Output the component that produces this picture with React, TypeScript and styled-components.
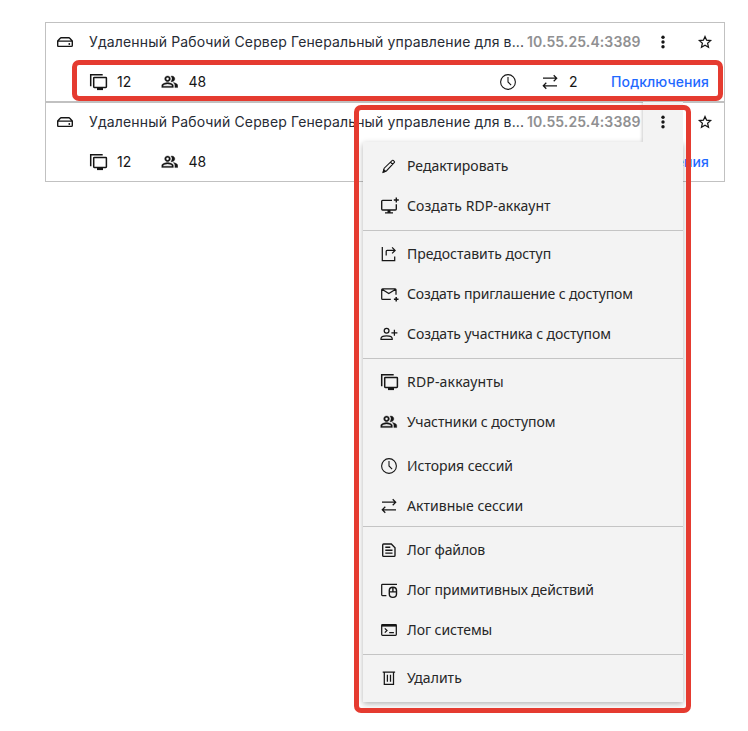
import React from 'react';
import styled, { createGlobalStyle } from 'styled-components';
import { MdOutlinePeopleAlt } from 'react-icons/md';

const GlobalStyle = createGlobalStyle`
  *, *::before, *::after { box-sizing: border-box; }
  body { margin: 0; background: #fff; }
`;

const Page = styled.main`
  position: relative;
  width: 748px;
  height: 731px;
  padding: 22px 23px 0 45px;
  overflow: hidden;
  font-family: Inter, 'Liberation Sans', sans-serif;
  color: #161616;
`;

const Card = styled.section`
  position: relative;
  height: 80px;
  box-shadow: inset 0 0 0 1px #c1c1c1;
`;

const TitleRow = styled.header`
  display: flex;
  align-items: center;
  height: 40px;
  padding-left: 10px;
`;

const StatsRow = styled.div`
  display: flex;
  align-items: center;
  height: 40px;
  padding: 0 16px 0 43px;
`;

const Title = styled.span`
  flex: none;
  width: 438px;
  margin-left: 14px;
  font-size: 14px;
  line-height: 20px;
  letter-spacing: 0.14px;
  white-space: nowrap;
  color: #272b35;
`;

const Address = styled.span`
  flex: none;
  width: 116px;
  font-size: 14px;
  font-weight: 600;
  line-height: 20px;
  letter-spacing: 0.1px;
  white-space: nowrap;
  color: #909092;
`;

const IconButton = styled.button<{ $open?: boolean }>`
  position: relative;
  z-index: ${(p) => (p.$open ? 3 : 0)};
  display: flex;
  flex: none;
  align-items: center;
  justify-content: center;
  width: 40px;
  height: 40px;
  padding: 0;
  border: 0;
  color: inherit;
  background: ${(p) => (p.$open ? '#f3f3f3' : 'transparent')};
  box-shadow: ${(p) => (p.$open ? '-1px 0 3px rgba(0, 0, 0, 0.2)' : 'none')};
  clip-path: ${(p) => (p.$open ? 'inset(0 0 0 -6px)' : 'none')};

  & + & { margin-left: 2px; }
`;

const Stat = styled.span<{ $width: number }>`
  display: flex;
  flex: none;
  align-items: center;
  gap: 9px;
  width: ${(p) => p.$width}px;
  font-size: 14px;
  line-height: 20px;
`;

const Spacer = styled.span`
  flex: 1;
`;

const ConnectionsLink = styled.a`
  font-size: 14px;
  font-weight: 500;
  line-height: 20px;
  letter-spacing: 0.08px;
  color: #1f69ff;
`;

const Menu = styled.nav`
  position: absolute;
  z-index: 2;
  top: 40px;
  left: 318px;
  width: 320px;
  font-family: 'Noto Sans', sans-serif;
  background: #f3f3f3;
  box-shadow: 0 2px 6px rgba(0, 0, 0, 0.3);
`;

const MenuGroup = styled.div<{ $flush: boolean }>`
  padding: 4px 0 ${(p) => (p.$flush ? 0 : 4)}px;

  & + & {
    padding-top: 3px;
    border-top: 1px solid #c4c4c4;
  }
`;

const MenuSubgroup = styled.div`
  & + & { margin-top: 4px; }
`;

const MenuItem = styled.div`
  display: flex;
  align-items: center;
  gap: 8px;
  height: 40px;
  padding-left: 16px;
`;

const MenuLabel = styled.span<{ $tracking: number }>`
  font-size: 14px;
  line-height: 20px;
  letter-spacing: ${(p) => p.$tracking}px;
  white-space: nowrap;
  color: #262626;
`;

const IconFrame = styled.span`
  display: flex;
  flex: none;
  align-items: center;
  justify-content: center;
  width: 20px;
  height: 20px;
`;

const Highlight = styled.div<{ $x: number; $y: number; $w: number; $h: number }>`
  position: absolute;
  z-index: 5;
  left: ${(p) => p.$x}px;
  top: ${(p) => p.$y}px;
  width: ${(p) => p.$w}px;
  height: ${(p) => p.$h}px;
  border: 5px solid #e53b30;
  border-radius: 7px;
  pointer-events: none;
`;

const Glyph = styled.svg.attrs({ viewBox: '0 0 20 20', width: 20, height: 20 })`
  fill: none;
  stroke: #161616;
  stroke-width: 1.25;
`;

const PeopleGlyph = styled(MdOutlinePeopleAlt)`
  width: 17.5px;
  height: 17.5px;
  color: #161616;
  stroke: #161616;
  stroke-width: 0.4;

  path[fill='none'] { stroke: none; }
`;

const icons = {
  server: (
    <Glyph>
      <path
        d="M2.7 9 5.2 6.2Q5.6 5.7 6.2 5.7h7.6q.6 0 1 .5L17.3 9v4.4q0 1-1 1H3.7q-1 0-1-1ZM2.7 9.1h14.6"
        strokeWidth="1.4"
      />
      <circle cx="14.3" cy="12" r=".9" fill="#161616" stroke="none" />
    </Glyph>
  ),
  dots: (
    <Glyph>
      <g fill="#161616" stroke="none">
        <circle cx="10" cy="5.3" r="1.7" />
        <circle cx="10" cy="10" r="1.7" />
        <circle cx="10" cy="14.7" r="1.7" />
      </g>
    </Glyph>
  ),
  star: (
    <Glyph>
      <path d="m10 4.6 1.6 3.6 4 .4-3 2.7.9 3.9-3.5-2-3.5 2 .9-3.9-3-2.7 4-.4Z" />
    </Glyph>
  ),
  edit: (
    <Glyph>
      <path d="m4.1 16.2 1.1-4 8.1-7.8q.5-.4 1 0l1.1 1.1q.4.5 0 1l-7.8 8.2ZM11.5 6.2l2.2 2.3" strokeWidth="1.1" />
      <path d="m3.6 16.8.9-4 3.2 3Z" fill="#161616" stroke="none" />
    </Glyph>
  ),
  addScreen: (
    <Glyph>
      <path d="M13 4.4H3.6q-.9 0-.9.9v7.8q0 .9.9.9h12.8q.9 0 .9-.9V8.3M6 16.9h8" strokeWidth="1.35" />
      <path d="M10 14v2.9" strokeWidth="3" />
      <path d="M17.3 1.5v5M14.8 4h5" strokeWidth="1.4" />
    </Glyph>
  ),
  share: (
    <Glyph>
      <path d="M3.3 3v13.7h12.4v-4.2M7.2 11.5V7.3q0-.9.9-.9H16M13.1 3.4l3 3-3 3" />
    </Glyph>
  ),
  addMail: (
    <Glyph>
      <path d="M11.8 15.4H3.6q-.9 0-.9-.9V5.7q0-.9.9-.9h12.5q.9 0 .9.9v5.1M3 5.2l6.8 4.3 6.9-4.3" />
      <path d="M17.2 12.9v4.6M14.9 15.2h4.6" strokeWidth="1.5" />
    </Glyph>
  ),
  addUser: (
    <Glyph>
      <circle cx="7.6" cy="6.8" r="2.4" />
      <path d="M2 15.4v-.8q0-2.8 5.6-2.8t5.6 2.8v.8ZM15.4 5.8v6M12.4 8.8h6" />
    </Glyph>
  ),
  screens: (
    <Glyph>
      <path d="M2.7 14.2V2.7h12" strokeWidth="1.5" />
      <rect x="5.7" y="5.4" width="12.7" height="10" rx=".6" strokeWidth="1.5" />
      <path d="M9 17h6" strokeWidth="2.2" />
    </Glyph>
  ),
  people: <PeopleGlyph />,
  clock: (
    <Glyph>
      <circle cx="10" cy="10" r="7.4" strokeWidth="1.1" />
      <path d="M10 5v5l3.1 3.2" strokeWidth="1.1" />
    </Glyph>
  ),
  swap: (
    <Glyph>
      <path d="M3 6.2h13.5M13.7 3.2l3 3-3 3M17 13.8H3.5M6.3 10.8l-3 3 3 3" />
    </Glyph>
  ),
  file: (
    <Glyph>
      <path
        d="M4.6 4h7.7l3.7 3.7v7.7q0 .9-.9.9H4.6q-.9 0-.9-.9V4.9q0-.9.9-.9ZM6.3 7.2h5M6.3 10.2h7.2M6.3 13.1h7.2"
        strokeWidth="1.35"
      />
    </Glyph>
  ),
  mouse: (
    <Glyph>
      <path d="M18 4.3H3.5q-.8 0-.8.8v9.6q0 .8.8.8H7.4" />
      <path
        d="M10.3 10.5q0-3.2 3.6-3.2t3.6 3.2v3.6q0 3.3-3.6 3.3t-3.6-3.3ZM10.3 11.9h7.2M13.9 7.3v4.6"
        strokeWidth="1.4"
      />
    </Glyph>
  ),
  terminal: (
    <Glyph>
      <rect x="2.7" y="4.7" width="14.6" height="10.7" rx=".8" />
      <path d="M2.7 5.5h14.6" strokeWidth="2.2" />
      <path d="m5.8 8.4 2.2 2.1-2.2 2.1M10.2 12.6h4.7" />
    </Glyph>
  ),
  trash: (
    <Glyph>
      <path d="M3.7 4.2h12.4M5.3 4.2v12.2h9.2V4.2M8.4 6.7v7M11.5 6.7v7" />
    </Glyph>
  ),
};

type IconName = keyof typeof icons;
type Entry = { icon: IconName; label: string; tracking: number };
type Group = { flush?: boolean; sections: Entry[][] };

const menuGroups: Group[] = [
  {
    sections: [[
      { icon: 'edit', label: 'Редактировать', tracking: 0 },
      { icon: 'addScreen', label: 'Создать RDP-аккаунт', tracking: 0.08 },
    ]],
  },
  {
    sections: [[
      { icon: 'share', label: 'Предоставить доступ', tracking: -0.02 },
      { icon: 'addMail', label: 'Создать приглашение с доступом', tracking: -0.13 },
      { icon: 'addUser', label: 'Создать участника с доступом', tracking: -0.07 },
    ]],
  },
  {
    flush: true,
    sections: [
      [
        { icon: 'screens', label: 'RDP-аккаунты', tracking: 0.17 },
        { icon: 'people', label: 'Участники с доступом', tracking: -0.1 },
      ],
      [
        { icon: 'clock', label: 'История сессий', tracking: -0.05 },
        { icon: 'swap', label: 'Активные сессии', tracking: 0.04 },
      ],
    ],
  },
  {
    sections: [[
      { icon: 'file', label: 'Лог файлов', tracking: -0.1 },
      { icon: 'mouse', label: 'Лог примитивных действий', tracking: -0.12 },
      { icon: 'terminal', label: 'Лог системы', tracking: -0.06 },
    ]],
  },
  { sections: [[{ icon: 'trash', label: 'Удалить', tracking: 0.04 }]] },
];

function Icon({ name }: { name: IconName }) {
  return <IconFrame>{icons[name]}</IconFrame>;
}

function ContextMenu() {
  return (
    <Menu>
      {menuGroups.map((group, g) => (
        <MenuGroup key={g} $flush={!!group.flush}>
          {group.sections.map((entries, s) => (
            <MenuSubgroup key={s}>
              {entries.map((entry) => (
                <MenuItem key={entry.label}>
                  <Icon name={entry.icon} />
                  <MenuLabel $tracking={entry.tracking}>{entry.label}</MenuLabel>
                </MenuItem>
              ))}
            </MenuSubgroup>
          ))}
        </MenuGroup>
      ))}
    </Menu>
  );
}

function ServerCard({ menuOpen = false }: { menuOpen?: boolean }) {
  return (
    <Card>
      <TitleRow>
        <Icon name="server" />
        <Title>Удаленный Рабочий Сервер Генеральный управление для в...</Title>
        <Address>10.55.25.4:3389</Address>
        <IconButton $open={menuOpen} aria-label="Меню">
          <Icon name="dots" />
        </IconButton>
        <IconButton aria-label="Избранное">
          <Icon name="star" />
        </IconButton>
      </TitleRow>
      <StatsRow>
        <Stat $width={71.5}>
          <Icon name="screens" />
          12
        </Stat>
        <Stat $width={72}>
          <Icon name="people" />
          48
        </Stat>
        <Spacer />
        <Stat $width={42}>
          <Icon name="clock" />
        </Stat>
        <Stat $width={71}>
          <Icon name="swap" />
          2
        </Stat>
        <ConnectionsLink>Подключения</ConnectionsLink>
      </StatsRow>
      {menuOpen && <ContextMenu />}
    </Card>
  );
}

export default function App() {
  return (
    <Page>
      <GlobalStyle />
      <ServerCard />
      <ServerCard menuOpen />
      <Highlight $x={72} $y={60} $w={651} $h={41} />
      <Highlight $x={354} $y={105} $w={337} $h={608} />
    </Page>
  );
}
